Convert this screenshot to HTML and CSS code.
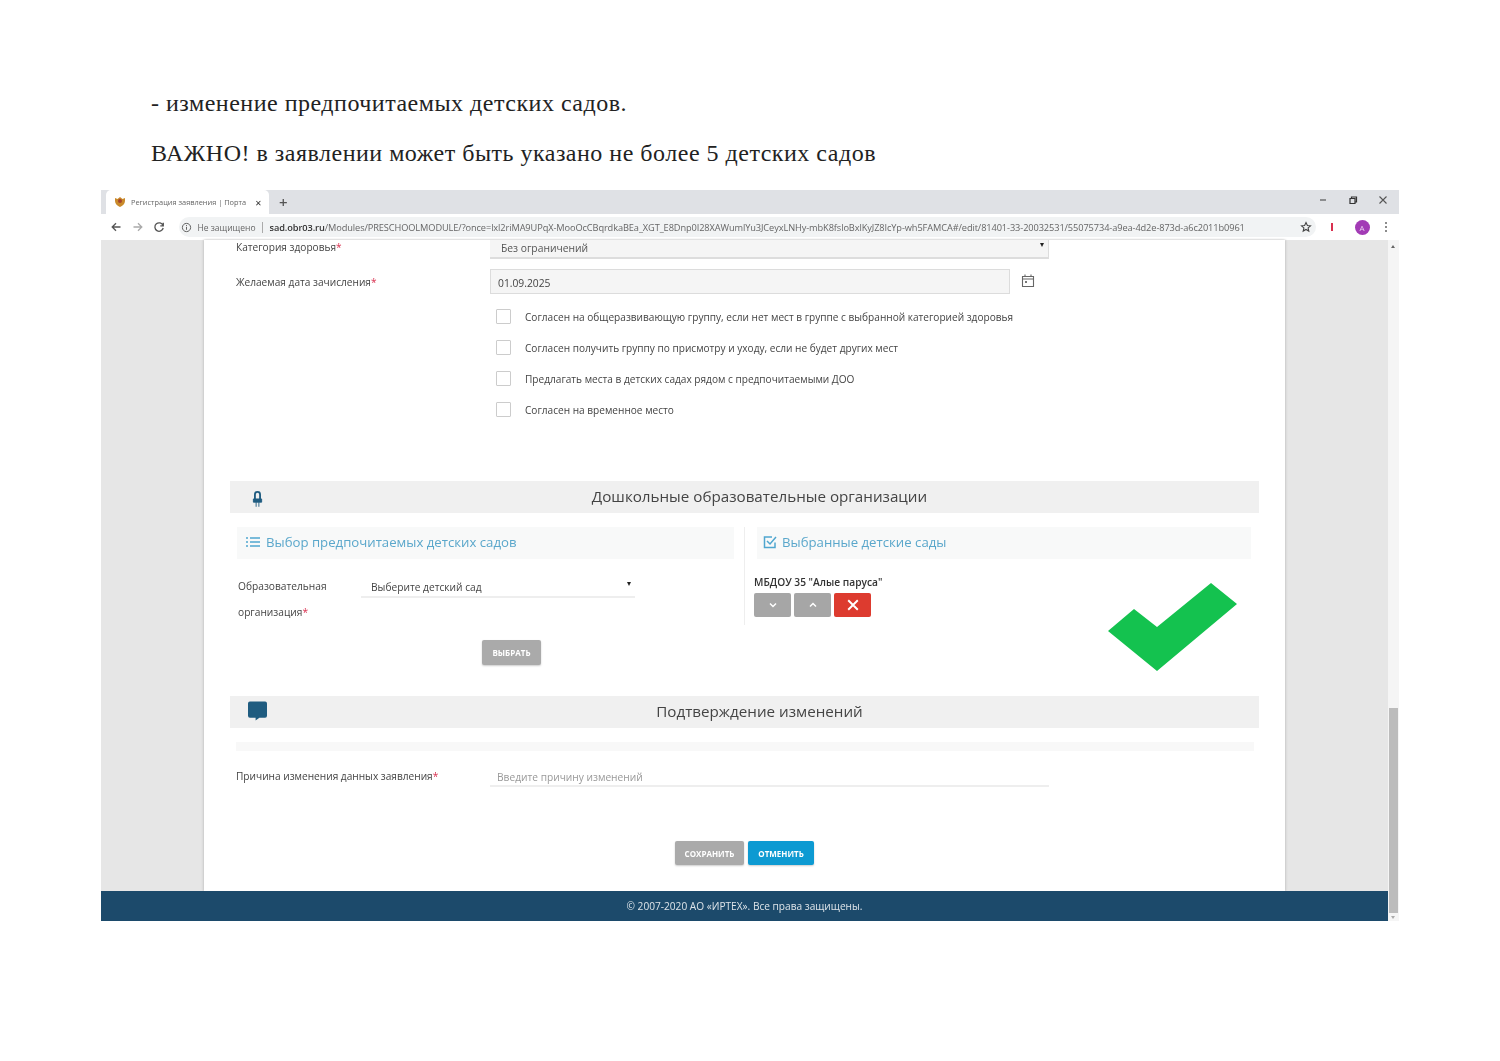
FILE: index.html
```html
<!DOCTYPE html>
<html lang="ru">
<head>
<meta charset="utf-8">
<title>Документ</title>
<link rel="stylesheet" href="styles.css">
</head>
<body>
<main class="sheet">
  <p class="doc-line first">- изменение предпочитаемых детских садов.</p>
  <p class="doc-line second">ВАЖНО! в заявлении может быть указано не более 5 детских садов</p>

  <section class="shot">
    <div class="tabstrip">
      <div class="tab">
        <svg class="favicon" viewBox="0 0 12 12"><path d="M1 2l2.500 1L6 1l2.500 2L11 2v3c0 3-2.500 5-5 6-2.500-1-5-3-5-6z" fill="#c98a2a"/><circle cx="6" cy="5" r="2" fill="#a5432f"/></svg>
        <span class="tab-title">Регистрация заявления | Порта</span>
        <span class="tab-close">✕</span>
      </div>
      <span class="tab-new">+</span>
      <div class="win-controls">
        <svg viewBox="0 0 10 10"><path d="M2 5h6" stroke="#555" stroke-width="1.200"/></svg>
        <svg viewBox="0 0 10 10"><path d="M2 3.500h5v5H2zM3.500 3.500V2H8.500v5H7" fill="none" stroke="#333" stroke-width="1.200"/></svg>
        <svg viewBox="0 0 10 10"><path d="M1.500 1.500l7 7M8.500 1.500l-7 7" stroke="#555" stroke-width="1.100"/></svg>
      </div>
    </div>
    <div class="toolbar">
      <svg class="nav" viewBox="0 0 12 12"><path d="M10.500 6h-8M6 2.200L2.200 6 6 9.800" fill="none" stroke="#555" stroke-width="1.300"/></svg>
      <svg class="nav" viewBox="0 0 12 12"><path d="M1.500 6h8M6 2.200L9.800 6 6 9.800" fill="none" stroke="#aaa" stroke-width="1.300"/></svg>
      <svg class="nav" viewBox="0 0 12 12"><path d="M10 4.500A4.200 4.200 0 1 0 10.200 7M10.300 1.800v3h-3" fill="none" stroke="#555" stroke-width="1.300"/></svg>
      <div class="omnibox">
        <svg class="info" viewBox="0 0 12 12"><circle cx="6" cy="6" r="4.500" fill="none" stroke="#555"/><path d="M6 5.300v3.200M6 3.300v1" stroke="#555"/></svg>
        <span class="insecure">Не защищено</span>
        <span class="url"><b>sad.obr03.ru</b>/Modules/PRESCHOOLMODULE/?once=lxl2riMA9UPqX-MooOcCBqrdkaBEa_XGT_E8Dnp0I28XAWumlYu3JCeyxLNHy-mbK8fsloBxlKyJZ8IcYp-wh5FAMCA#/edit/81401-33-20032531/55075734-a9ea-4d2e-873d-a6c2011b0961</span>
        <svg class="star" viewBox="0 0 12 12"><path d="M6 1.500l1.400 3 3.100.3-2.400 2.100.7 3.200L6 8.500l-2.800 1.600.7-3.200L1.500 4.800l3.100-.3z" fill="none" stroke="#444" stroke-width="1.100"/></svg>
      </div>
      <span class="ext"></span>
      <span class="avatar">A</span>
      <svg class="menu" viewBox="0 0 4 12"><circle cx="2" cy="2" r="1" fill="#666"/><circle cx="2" cy="6" r="1" fill="#666"/><circle cx="2" cy="10" r="1" fill="#666"/></svg>
    </div>

    <div class="viewport">
      <div class="page-col">
        <div class="backdrop">
          <div class="panel">
            <div class="form-row row-health">
              <span class="label">Категория здоровья<em>*</em></span>
              <div class="select-box">Без ограничений<i class="caret"></i></div>
            </div>
            <div class="form-row row-date">
              <span class="label">Желаемая дата зачисления<em>*</em></span>
              <div class="date-input">01.09.2025</div>
              <svg class="calendar" viewBox="0 0 14 14"><path d="M1.500 3h11v10h-11zM1.500 5.500h11M4 1v2M10 1v2" fill="none" stroke="#666" stroke-width="1.100"/><rect x="4" y="7.500" width="2" height="2" fill="#777"/></svg>
            </div>
            <ul class="checks">
              <li><span class="box"></span>Согласен на общеразвивающую группу, если нет мест в группе с выбранной категорией здоровья</li>
              <li><span class="box"></span>Согласен получить группу по присмотру и уходу, если не будет других мест</li>
              <li><span class="box"></span>Предлагать места в детских садах рядом с предпочитаемыми ДОО</li>
              <li><span class="box"></span>Согласен на временное место</li>
            </ul>

            <div class="bar bar-orgs">
              <svg class="bar-icon pin" viewBox="0 0 12 18"><path d="M3.200 10V4.500a2.800 2.800 0 0 1 5.600 0V10" fill="none" stroke="#1f5c80" stroke-width="2"/><path d="M1.500 9.500h9v3.500h-9zM4.500 13v5M7.500 13v5" fill="#1f5c80" stroke="#1f5c80"/></svg>
              <h2>Дошкольные образовательные организации</h2>
            </div>

            <div class="columns">
              <div class="col-left">
                <div class="sub-head">
                  <svg class="sub-icon" viewBox="0 0 14 12"><path d="M4 2h10M4 6h10M4 10h10M0 2h2M0 6h2M0 10h2" stroke="#4fa6cf" stroke-width="1.400"/></svg>
                  <span>Выбор предпочитаемых детских садов</span>
                </div>
                <div class="org-row">
                  <div class="org-label">Образовательная организация<em>*</em></div>
                  <div class="org-select">Выберите детский сад<i class="caret"></i></div>
                </div>
                <button class="btn btn-grey btn-pick" type="button">ВЫБРАТЬ</button>
              </div>
              <div class="col-right">
                <div class="sub-head">
                  <svg class="sub-icon" viewBox="0 0 14 14"><path d="M12 7.500V12.500H1.500V2H9" fill="none" stroke="#4fa6cf" stroke-width="1.500"/><path d="M4 6l3 3 6-7" fill="none" stroke="#4fa6cf" stroke-width="1.500"/></svg>
                  <span>Выбранные детские сады</span>
                </div>
                <div class="chosen-name">МБДОУ 35 "Алые паруса"</div>
                <div class="chosen-actions">
                  <span class="sq sq-grey"><svg viewBox="0 0 10 10"><path d="M2 3.500L5 6.500 8 3.500" fill="none" stroke="#fff" stroke-width="1.500"/></svg></span>
                  <span class="sq sq-grey"><svg viewBox="0 0 10 10"><path d="M2 6.500L5 3.500 8 6.500" fill="none" stroke="#fff" stroke-width="1.500"/></svg></span>
                  <span class="sq sq-red"><svg viewBox="0 0 10 10"><path d="M1 1l8 8M9 1l-8 8" stroke="#fff" stroke-width="1.600"/></svg></span>
                </div>
              </div>
            </div>

            <div class="bar bar-confirm">
              <svg class="bar-icon bubble" viewBox="0 0 20 20"><path d="M2 0h16a2 2 0 0 1 2 2v13a2 2 0 0 1-2 2h-6l-4 3v-3H2a2 2 0 0 1-2-2V2a2 2 0 0 1 2-2z" fill="#1f5c80"/></svg>
              <h2>Подтверждение изменений</h2>
            </div>
            <div class="thin-bar"></div>
            <div class="form-row row-reason">
              <span class="label">Причина изменения данных заявления<em>*</em></span>
              <div class="reason-input">Введите причину изменений</div>
            </div>
            <div class="actions">
              <button class="btn btn-grey btn-save" type="button">СОХРАНИТЬ</button>
              <button class="btn btn-blue btn-cancel" type="button">ОТМЕНИТЬ</button>
            </div>
          </div>
        </div>
        <footer class="footer">© 2007-2020 АО «ИРТЕХ». Все права защищены.</footer>
      </div>
      <div class="scrollbar"><i class="thumb"></i></div>
    </div>

    <svg class="big-check" viewBox="0 0 130 88"><polygon points="0,48 26,26 49,44 103,0 129,21 49,88" fill="#14c24f"/></svg>
  </section>
</main>
</body>
</html>
```
FILE: styles.css
```css
* { box-sizing: border-box; }
html, body { margin: 0; background: #fff; }
body { font-family: "Open Sans", "Noto Sans", sans-serif; }
.sheet { width: 1500px; height: 1061px; padding: 90px 101px 0; overflow: hidden; }
.doc-line { margin: 0 0 0 50px; font-family: "Liberation Serif", serif; font-size: 24px; letter-spacing: 0.5px; line-height: 26px; color: #222; }
.second { margin-top: 24px; }

.shot { position: relative; margin-top: 24px; width: 1298px; height: 731px; display: flex; flex-direction: column; filter: blur(0.55px); color: #444; font-size: 10.500px; }

.tabstrip { height: 24px; background: #dfe1e5; display: flex; align-items: center; flex: none; }
.tab { width: 163px; height: 24px; margin-left: 5px; background: #fff; border-radius: 5px 5px 0 0; display: flex; align-items: center; padding: 0 8px; }
.favicon { width: 12px; height: 12px; flex: none; }
.tab-title { margin-left: 5px; white-space: nowrap; font-size: 7.400px; color: #666; }
.tab-close { margin-left: 9px; font-size: 8px; color: #333; }
.tab-new { margin-left: 10px; font-size: 15px; font-weight: 600; line-height: 15px; color: #555; }
.win-controls { margin-left: auto; margin-right: 11px; display: flex; gap: 20px; margin-top: -4px; }
.win-controls svg { width: 10px; height: 10px; }

.toolbar { height: 26px; flex: none; background: #fff; display: flex; align-items: center; padding-left: 9px; }
.nav { width: 12px; height: 12px; margin-right: 9.500px; flex: none; }
.omnibox { width: 1137px; height: 20px; margin-left: 4px; background: #f1f3f4; border-radius: 10px; display: flex; align-items: center; padding-left: 2px; }
.info { width: 11px; height: 11px; flex: none; }
.insecure { margin-left: 6px; padding-right: 6px; border-right: 1px solid #aaa; line-height: 11px; font-size: 8.500px; color: #666; white-space: nowrap; }
.url { margin-left: 7px; width: 976px; white-space: nowrap; font-size: 9.240px; letter-spacing: -0.100px; color: #666; }
.url b { font-weight: 600; color: #333; }
.star { width: 12px; height: 12px; margin-left: 54px; flex: none; }
.ext { width: 2px; height: 8px; margin-left: 15px; background: #d9304f; flex: none; }
.avatar { width: 15px; height: 15px; margin-left: 22px; border-radius: 50%; background: #a23bb5; color: #e9cdee; font-size: 8px; line-height: 15px; text-align: center; flex: none; }
.menu { width: 4px; height: 12px; margin-left: 14px; flex: none; }

.viewport { flex: 1; display: flex; min-height: 0; }
.page-col { width: 1287px; display: flex; flex-direction: column; }
.backdrop { flex: 1; background: #e6e6e6; padding: 0 103px; }
.panel { width: 1081px; height: 651px; background: #fff; padding: 0 26px; box-shadow: -1px 0 2px #c9c9c9, 1px 0 2px #c9c9c9; overflow: hidden; }
.footer { height: 30px; flex: none; background: #1c4a6b; color: #dde4e9; display: flex; align-items: center; justify-content: center; font-size: 10.150px; }
.scrollbar { width: 11px; background: #f5f5f5; display: flex; flex-direction: column; justify-content: flex-end; padding: 0 1px 8px; position: relative; }
.scrollbar::before { content: ""; position: absolute; top: 5px; left: 3px; border: 2px solid transparent; border-bottom: 3px solid #666; border-top: 0; }
.scrollbar::after { content: ""; position: absolute; bottom: 2px; left: 3px; border: 2px solid transparent; border-top: 3px solid #aaa; border-bottom: 0; }
.thumb { height: 205px; background: #bcbcbc; display: block; }

.form-row { display: flex; padding-left: 6px; align-items: center; }
.label { width: 254px; flex: none; white-space: nowrap; font-size: 10.150px; color: #444; }
em { color: #d9304f; font-style: normal; }
.row-health { height: 19px; }
.row-health .label { margin-top: -5px; }
.select-box { width: 559px; height: 19px; background: #f5f5f5; border-right: 1px solid #ddd; border-bottom: 2px solid #ddd; padding-left: 11px; line-height: 17px; position: relative; color: #555; font-size: 10.300px; }
.caret { position: absolute; right: 4px; top: 3px; border: 2.500px solid transparent; border-top: 4px solid #222; border-bottom: 0; }
.row-date { margin-top: 10px; height: 25px; }
.date-input { width: 520px; height: 25px; background: #f5f5f5; border: 1px solid #dcdcdc; padding-left: 7px; line-height: 26px; color: #444; font-size: 10.300px; }
.calendar { width: 14px; height: 15px; margin-left: 11px; margin-top: -3px; }

.checks { list-style: none; margin: 15px 0 0 266px; padding: 0; display: flex; flex-direction: column; gap: 16px; }
.checks li { height: 15px; display: flex; align-items: center; white-space: nowrap; font-size: 10.100px; color: #444; padding-top: 1px; }
.box { width: 15px; height: 15px; border: 1px solid #ccc; margin: -1px 14px 0 0; flex: none; border-radius: 1px; }

.bar { height: 32px; background: #f0f0f0; position: relative; display: flex; align-items: center; justify-content: center; }
.bar h2 { margin: 0 0 2px; padding-left: 30px; font-size: 15.200px; font-weight: 400; color: #444; }
.bar-orgs { margin-top: 64px; }
.bar-icon { position: absolute; }
.pin { left: 22px; top: 9px; width: 11px; height: 17px; }
.bubble { left: 18px; top: 5px; width: 19px; height: 20px; }

.columns { display: flex; margin-top: 14px; height: 169px; }
.col-left { width: 515px; padding-left: 7px; border-right: 1px solid #eee; height: 98px; position: relative; }
.col-left .sub-head { width: 497px; }
.col-right { padding-left: 12px; }
.col-right .sub-head { width: 494px; padding-left: 6px; gap: 5px; }
.sub-head { height: 32px; background: #f8f9f9; display: flex; align-items: center; padding-left: 9px; gap: 6px; color: #5aa7cb; font-size: 13.200px; white-space: nowrap; }
.sub-head span { margin-bottom: 2px; }
.sub-icon { width: 14px; height: 14px; flex: none; margin-bottom: 2px; }

.org-row { display: flex; margin-top: 14px; margin-left: 1px; }
.org-label { width: 110px; line-height: 26px; font-size: 10.200px; color: #444; margin-right: 13px; }
.org-select { width: 274px; height: 25px; border-bottom: 2px solid #eee; padding-left: 10px; line-height: 28px; color: #444; font-size: 10.200px; position: relative; }
.org-select .caret { top: 9px; }
.btn { border: 0; border-radius: 2px; color: #fff; font-family: inherit; font-weight: 700; font-size: 8px; padding: 0; box-shadow: 0 1px 2px #ccc; }
.btn-grey { background: #aaa; }
.btn-blue { background: #0d9ad2; }
.btn-pick { width: 59px; height: 25px; display: block; position: absolute; left: 252px; top: 113px; }

.chosen-name { margin-top: 16px; margin-left: -3px; height: 15px; color: #333; font-size: 10.200px; font-weight: 600; white-space: nowrap; }
.chosen-actions { display: flex; gap: 3px; margin-left: -3px; margin-top: 3px; }
.sq { width: 37px; height: 24px; border-radius: 2px; display: flex; align-items: center; justify-content: center; }
.sq svg { width: 10px; height: 10px; }
.sq-grey { background: #a6a6a6; }
.sq-red { background: #dd3b2f; }
.sq-red svg { width: 12px; height: 12px; }

.thin-bar { height: 9px; margin: 14px 5px 0 6px; background: #f8f8f8; }
.row-reason { margin-top: 18px; height: 18px; }
.row-reason .label { margin-top: -4px; }
.reason-input { width: 559px; height: 18px; border-bottom: 2px solid #eee; padding-left: 7px; line-height: 17px; color: #999; font-size: 10.200px; }
.actions { display: flex; justify-content: center; gap: 4px; margin-top: 54px; }
.btn-save { width: 69px; height: 24px; }
.btn-cancel { width: 66px; height: 24px; }

.big-check { position: absolute; left: 1007px; top: 393px; width: 130px; height: 88px; }
```
